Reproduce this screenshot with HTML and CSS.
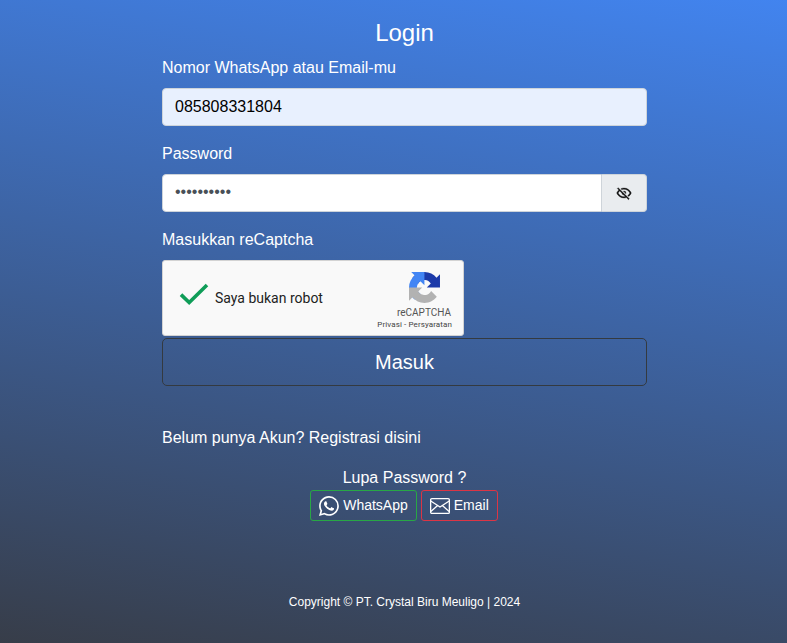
FILE: index.html
```html
<!DOCTYPE html>
<html lang="id">
<head>
<meta charset="utf-8">
<title>Login</title>
<link rel="stylesheet" href="styles.css">
</head>
<body>
<main class="login">
  <h1 class="title">Login</h1>
  <form>
    <div class="group">
      <label class="label" for="user">Nomor WhatsApp atau Email-mu</label>
      <input class="control filled" id="user" type="text" value="085808331804">
    </div>
    <div class="group">
      <label class="label" for="pass">Password</label>
      <div class="input-group">
        <div class="control password" id="pass">••••••••••</div>
        <span class="addon">
          <svg width="16" height="16" viewBox="0 0 24 24" fill="#111" stroke="#111" stroke-width=".5"><path d="M2,5.27L3.28,4L20,20.72L18.73,22L15.65,18.92C14.5,19.3 13.28,19.5 12,19.5C7,19.5 2.73,16.39 1,12C1.69,10.24 2.79,8.69 4.19,7.46L2,5.27M12,9A3,3 0 0,1 15,12C15,12.35 14.94,12.69 14.83,13L11,9.17C11.31,9.06 11.65,9 12,9M12,4.5C17,4.5 21.27,7.61 23,12C22.18,14.08 20.79,15.88 19,17.19L17.58,15.76C18.94,14.82 20.06,13.54 20.82,12C19.17,8.64 15.76,6.5 12,6.5C10.91,6.5 9.84,6.68 8.84,7L7.3,5.47C8.74,4.85 10.33,4.5 12,4.5M3.18,12C4.83,15.36 8.24,17.5 12,17.5C12.69,17.5 13.37,17.43 14,17.29L11.72,15C10.29,14.85 9.15,13.71 9,12.28L5.6,8.87C4.61,9.72 3.78,10.78 3.18,12Z"/></svg>
        </span>
      </div>
    </div>
    <div class="label">Masukkan reCaptcha</div>
    <div class="captcha">
      <svg class="check" width="30" height="24" viewBox="0 0 30 24" fill="none" stroke="#0f9d58" stroke-width="3.6"><path d="M2 11.6L10.2 19.5L28 2"/></svg>
      <span class="captcha-text">Saya bukan robot</span>
      <div class="brand">
        <svg width="31" height="31" viewBox="0 0 64 64"><path fill="#1c3aa9" d="M64 31.955l-.033-1.37V4.687l-7.16 7.16C50.948 4.674 42.033.093 32.05.093c-10.4 0-19.622 4.96-25.458 12.64l11.736 11.86a15.55 15.55 0 0 1 4.754-5.334c2.05-1.6 4.952-2.906 8.968-2.906.485 0 .86.057 1.135.163 4.976.393 9.288 3.14 11.828 7.124l-8.307 8.307L64 31.953"/><path fill="#4285f4" d="M31.862.094l-1.37.033H4.594l7.16 7.16C4.58 13.147 0 22.06 0 32.046c0 10.4 4.96 19.622 12.64 25.458L24.5 45.768a15.55 15.55 0 0 1-5.334-4.754c-1.6-2.05-2.906-4.952-2.906-8.968 0-.485.057-.86.163-1.135.393-4.976 3.14-9.288 7.124-11.828l8.307 8.307L31.86.095"/><path fill="#b2b2b2" d="M.001 32.045l.033 1.37v25.898l7.16-7.16c5.86 7.173 14.774 11.754 24.76 11.754 10.4 0 19.622-4.96 25.458-12.64l-11.736-11.86a15.55 15.55 0 0 1-4.754 5.334c-2.05 1.6-4.952 2.906-8.968 2.906-.485 0-.86-.057-1.135-.163-4.976-.393-9.288-3.14-11.828-7.124l8.307-8.307c-10.522.04-22.4.066-27.295-.005"/></svg>
        <div class="brand-name">reCAPTCHA</div>
        <div class="brand-links">Privasi - Persyaratan</div>
      </div>
    </div>
    <button class="submit" type="button">Masuk</button>
  </form>
  <p class="register">Belum punya Akun? Registrasi disini</p>
  <p class="forgot">Lupa Password ?</p>
  <div class="actions">
    <a class="btn green"><svg width="20" height="20" viewBox="0 0 16 16" fill="#fff"><path d="M13.601 2.326A7.85 7.85 0 0 0 7.994 0C3.627 0 .068 3.558.064 7.926c0 1.399.366 2.76 1.057 3.965L0 16l4.204-1.102a7.9 7.9 0 0 0 3.79.965h.004c4.368 0 7.926-3.558 7.93-7.93A7.9 7.9 0 0 0 13.6 2.326zM7.994 14.521a6.6 6.6 0 0 1-3.356-.92l-.24-.144-2.494.654.666-2.433-.156-.251a6.56 6.56 0 0 1-1.007-3.505c0-3.626 2.957-6.584 6.591-6.584a6.56 6.56 0 0 1 4.66 1.931 6.56 6.56 0 0 1 1.928 4.66c-.004 3.639-2.961 6.592-6.592 6.592m3.615-4.934c-.197-.099-1.17-.578-1.353-.646-.182-.065-.315-.099-.445.099-.133.197-.513.646-.627.775-.114.133-.232.148-.43.05-.197-.1-.836-.308-1.592-.985-.59-.525-.985-1.175-1.103-1.372-.114-.198-.011-.304.088-.403.087-.088.197-.232.296-.346.1-.114.133-.198.198-.33.065-.134.034-.248-.015-.347-.05-.099-.445-1.076-.612-1.47-.16-.389-.323-.335-.445-.34-.114-.007-.247-.007-.38-.007a.73.73 0 0 0-.529.247c-.182.198-.691.677-.691 1.654s.71 1.916.81 2.049c.098.133 1.394 2.132 3.383 2.992.47.205.84.326 1.129.418.475.152.904.129 1.246.08.38-.058 1.171-.48 1.338-.943.164-.464.164-.86.114-.943-.049-.084-.182-.133-.38-.232"/></svg><span>WhatsApp</span></a>
    <a class="btn red"><svg width="20" height="20" viewBox="0 0 20 20" fill="none" stroke="#fff" stroke-width="1.3"><rect x=".65" y="2.65" width="18.7" height="14.7" rx="1.2"/><path d="M.8 5L10 11L19.2 5M.8 15.6L7.6 9.6M19.2 15.6L12.4 9.6"/></svg><span>Email</span></a>
  </div>
  <footer class="footer">Copyright © PT. Crystal Biru Meuligo | 2024</footer>
</main>
</body>
</html>
```
FILE: styles.css
```css
* { box-sizing: border-box; }
html { height: 100%; }
body {
  margin: 0;
  height: 643px;
  overflow: hidden;
  background: linear-gradient(10deg, #373b44 -3%, #4286f4 103%);
  color: #fff;
  font: 16px/24px "Liberation Sans", Arial, sans-serif;
}
.login { width: 485px; margin-left: 162px; padding-top: 18px; }
.title { margin: 0 0 9px; font-size: 24px; line-height: 29px; font-weight: 400; text-align: center; }
.group { margin-bottom: 16px; }
.label { display: block; margin-bottom: 8px; }
.control {
  display: block;
  width: 100%;
  height: 38px;
  padding: 6px 12px;
  border: 1px solid #ced4da;
  border-radius: 4px;
  background: #fff;
  font: inherit;
  color: #000;
}
.filled { background: #e8f0fe; }
.input-group { display: flex; }
.password {
  flex: 1;
  border-radius: 4px 0 0 4px;
  color: #495057;
  line-height: 22px;
}
.addon {
  display: flex;
  align-items: center;
  justify-content: center;
  width: 45px;
  border: 1px solid #ced4da;
  border-left: 0;
  border-radius: 0 4px 4px 0;
  background: #e9ecef;
}
.captcha {
  display: flex;
  align-items: center;
  width: 302px;
  height: 76px;
  margin-bottom: 2px;
  padding: 0 11px 0 16px;
  border: 1px solid #d3d3d3;
  border-radius: 3px;
  background: #f9f9f9;
  color: #222;
  font-family: Roboto, sans-serif;
}
.check { margin-top: -6px; }
.captcha-text { margin-left: 6px; font-size: 14px; }
.brand {
  display: flex;
  flex-direction: column;
  align-items: flex-end;
  margin-left: auto;
  color: #555;
}
.brand svg { margin: 7px 12px 3px 0; }
.brand-name { font-size: 10px; line-height: 13px; padding-right: 1px; }
.brand-links { font-size: 8px; line-height: 12px; letter-spacing: .1px; color: #444; }
.submit {
  display: block;
  width: 100%;
  height: 48px;
  padding: 0;
  border: 1px solid #343a40;
  border-radius: 5px;
  background: transparent;
  color: #fff;
  font: 20px/30px "Liberation Sans", Arial, sans-serif;
}
.register { margin: 40px 0 16px; }
.forgot { margin: 0; text-align: center; }
.actions { display: flex; justify-content: center; gap: 4px; padding-right: 1px; }
.btn {
  display: flex;
  align-items: center;
  gap: 4px;
  height: 31px;
  padding: 0 8px;
  border: 1px solid #28a745;
  border-radius: 3px;
  font-size: 14px;
  line-height: 21px;
}
.btn svg { margin-top: 1px; }
.red { border-color: #dc3545; }
.footer { margin-top: 72px; font-size: 12px; line-height: 18px; text-align: center; }
```
